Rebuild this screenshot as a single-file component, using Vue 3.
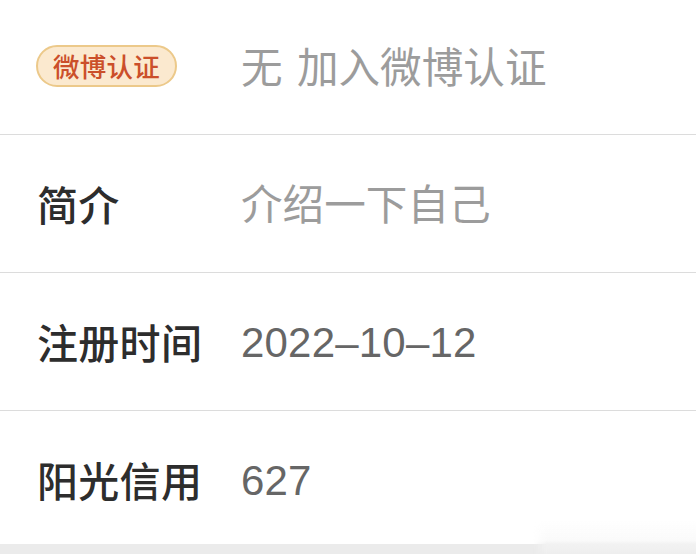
<script setup>
const rows = [
  { id: 'v', value: '无 加入微博认证', muted: true },
  { id: 'b', label: '简介', value: '介绍一下自己', muted: true },
  { id: 't', label: '注册时间', value: '2022–10–12' },
  { id: 'c', label: '阳光信用', value: '627' }
]
</script>

<template>
  <main class="page">
    <section class="list">
      <div v-for="row in rows" :key="row.id" class="row">
        <div class="label">
          <span v-if="!row.label" class="badge">微博认证</span>
          <template v-else>{{ row.label }}</template>
        </div>
        <div class="value" :class="{ muted: row.muted }">{{ row.value }}</div>
      </div>
    </section>
    <div class="foot"></div>
    <div class="smudge"></div>
  </main>
</template>

<style>
html, body { margin: 0; background: #fff; }
</style>

<style scoped>
.page {
  position: relative;
  width: 696px;
  height: 554px;
  overflow: hidden;
  display: flex;
  flex-direction: column;
  background: #fff;
  font-family: "Noto Sans CJK SC", "Liberation Sans", sans-serif;
}
.list { flex: 1; }
.row {
  height: 137px;
  display: flex;
  align-items: center;
  border-bottom: 1px solid #dcdcdc;
}
.row:first-child { height: 134px; }
.row:last-child { height: 129px; padding-top: 4px; border-bottom: 0; }
.label {
  width: 241px;
  padding-left: 37px;
  margin-top: -2px;
  box-sizing: border-box;
  flex: none;
  font-size: 41px;
  letter-spacing: 0.3px;
  font-weight: 500;
  color: #2d2d2d;
}
.value {
  font-family: "Liberation Sans", "Noto Sans CJK SC", sans-serif;
  font-size: 42px;
  letter-spacing: 0.2px;
  margin-top: 3px;
  color: #666;
}
.value.muted {
  font-family: "Noto Sans CJK SC", sans-serif;
  font-size: 41.6px;
  letter-spacing: 0;
  word-spacing: 5px;
  line-height: 56px;
  margin-top: -4px;
  color: #9c9c9c;
}
.badge {
  display: block;
  width: 141px;
  height: 42px;
  margin-left: -1px;
  margin-top: -1px;
  line-height: 37px;
  box-sizing: border-box;
  border: 2px solid #ecc98a;
  border-radius: 21px;
  background: #fbe9cf;
  color: #cb4f2a;
  font-size: 26.5px;
  font-weight: 500;
  text-align: center;
}
.foot { height: 10px; flex: none; background: #ebebeb; }
.smudge {
  position: absolute;
  right: 0;
  bottom: 0;
  width: 163px;
  height: 34px;
  background: linear-gradient(#fff0, #fafafa 60%, #f2f2f2 71%, #eeeeee);
  -webkit-mask-image: linear-gradient(90deg, transparent, #000 14px);
  mask-image: linear-gradient(90deg, transparent, #000 14px);
}
</style>
